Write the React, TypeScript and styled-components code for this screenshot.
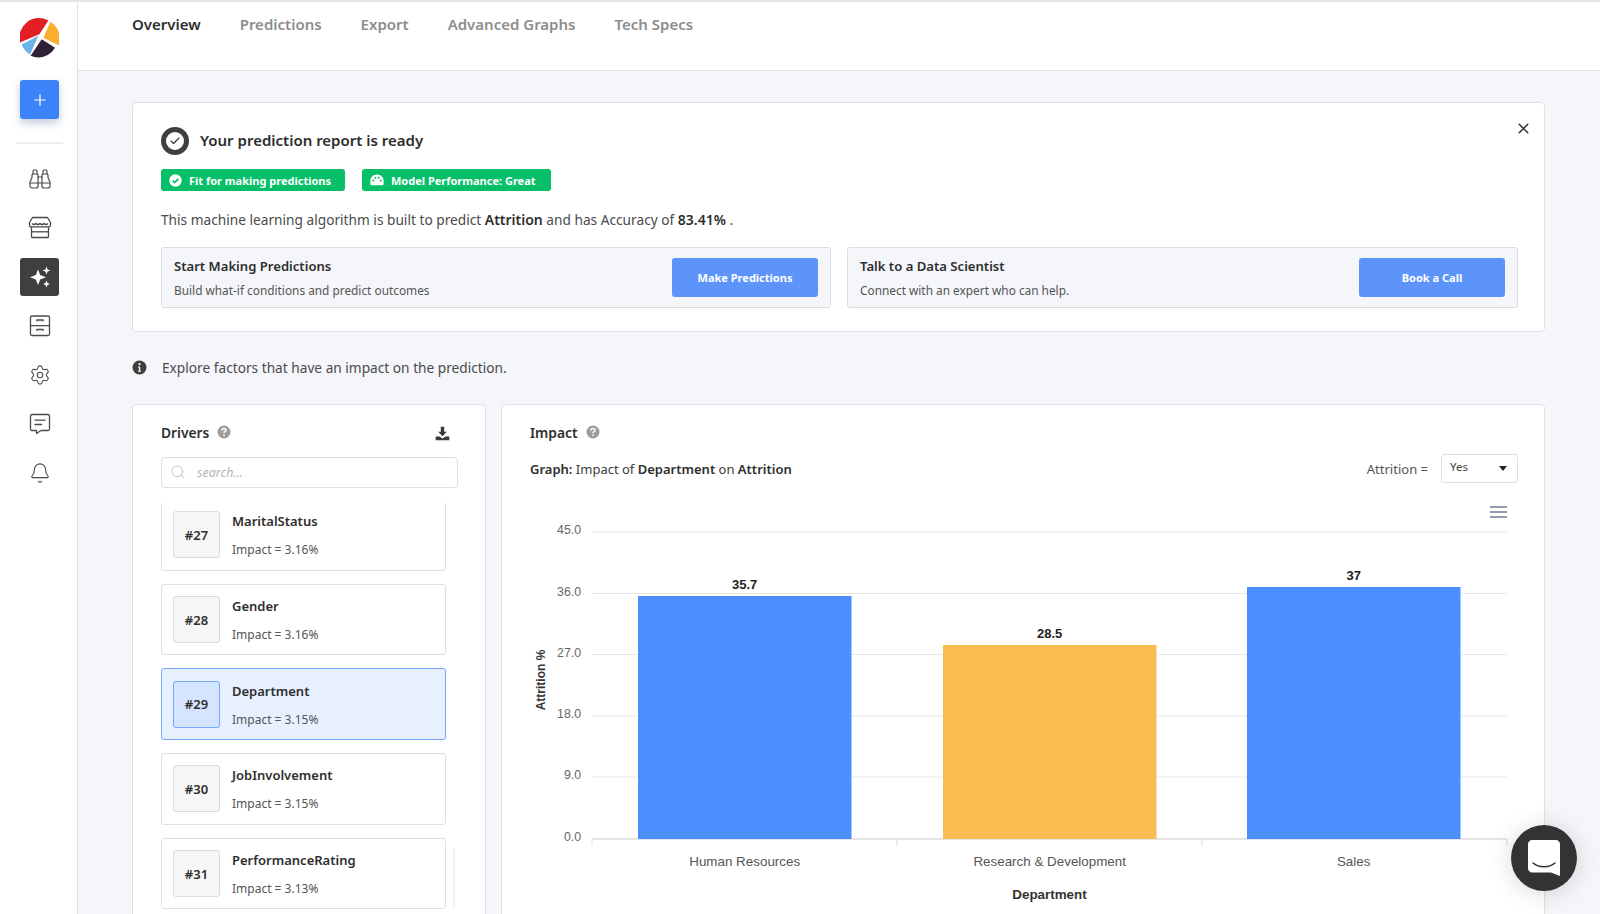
import styled, { createGlobalStyle } from "styled-components";
import { Bell, Binoculars, Check, Plus, Search, Settings, X } from "lucide-react";

interface Driver {
  rank: number;
  name: string;
  impact: string;
  active?: boolean;
}

const drivers: Driver[] = [
  { rank: 27, name: "MaritalStatus", impact: "3.16%" },
  { rank: 28, name: "Gender", impact: "3.16%" },
  { rank: 29, name: "Department", impact: "3.15%", active: true },
  { rank: 30, name: "JobInvolvement", impact: "3.15%" },
  { rank: 31, name: "PerformanceRating", impact: "3.13%" },
];

const bars = [
  { label: "Human Resources", value: "35.7", x: 638, top: 596, color: "#4d8eff" },
  { label: "Research & Development", value: "28.5", x: 943, top: 645, color: "#f8bc50" },
  { label: "Sales", value: "37", x: 1247, top: 587, color: "#4d8eff" },
];

const ticks = [
  { label: "45.0", y: 532 },
  { label: "36.0", y: 593.5 },
  { label: "27.0", y: 654.5 },
  { label: "18.0", y: 716 },
  { label: "9.0", y: 777 },
  { label: "0.0", y: 839 },
];

const GlobalStyle = createGlobalStyle`
  html, body {
    margin: 0;
    height: 100%;
    background: #f4f6fa;
    font-family: "Noto Sans", "Open Sans", sans-serif;
    color: #2e2e2e;
  }
  * {
    box-sizing: border-box;
  }
`;

const Page = styled.div`
  display: flex;
  width: 1600px;
  height: 914px;
  overflow: hidden;
  position: relative;
  border-top: 2px solid #e3e4e8;
`;

const Sidebar = styled.aside`
  width: 78px;
  flex-shrink: 0;
  background: #fff;
  border-right: 1px solid #dfe1e6;
  display: flex;
  flex-direction: column;
  align-items: center;
  padding: 16px 0 0 2px;
`;

const Logo = styled.svg`
  width: 39px;
  height: 40px;
  margin-bottom: 22px;
`;

const AddButton = styled.div`
  width: 39px;
  height: 39px;
  border-radius: 3px;
  background: #3c82f9;
  color: #fff;
  display: flex;
  align-items: center;
  justify-content: center;
  box-shadow: 0 4px 9px rgba(60, 90, 140, 0.3);
`;

const SideDivider = styled.div`
  width: 47px;
  height: 2px;
  background: #eceef1;
  margin: 23px 0 16px;
`;

const NavItem = styled.div<{ $active?: boolean }>`
  width: 39px;
  height: 38px;
  margin-bottom: 11px;
  border-radius: 3px;
  display: flex;
  align-items: center;
  justify-content: center;
  color: ${(p) => (p.$active ? "#fff" : "#4a4a4a")};
  background: ${(p) => (p.$active ? "#3f3f3f" : "transparent")};
`;

const Main = styled.div`
  flex: 1;
  display: flex;
  flex-direction: column;
  min-width: 0;
`;

const TopBar = styled.nav`
  height: 69px;
  flex-shrink: 0;
  background: #fff;
  border-bottom: 1px solid #dfe1e6;
  display: flex;
  gap: 39px;
  padding: 11px 0 0 54px;
`;

const Tab = styled.div<{ $active?: boolean }>`
  font-size: 15px;
  line-height: 22px;
  font-weight: 600;
  color: ${(p) => (p.$active ? "#2e2e2e" : "#8d8d8d")};
`;

const Content = styled.main`
  padding: 31px 55px 0 54px;
  display: flex;
  flex-direction: column;
`;

const Banner = styled.section`
  position: relative;
  height: 230px;
  background: #fff;
  border: 1px solid #dcdfe4;
  border-radius: 4px;
  padding: 24px 27px 0 28px;
`;

const BannerTitle = styled.div`
  display: flex;
  align-items: center;
  gap: 11px;
  font-size: 15px;
  font-weight: 600;
  line-height: 28px;
`;

const TitleText = styled.span`
  margin-top: -2px;
`;

const CheckRing = styled.div`
  width: 28px;
  height: 28px;
  flex-shrink: 0;
  border-radius: 50%;
  border: 5px solid #3f3f3f;
  color: #333;
  display: flex;
  align-items: center;
  justify-content: center;
`;

const CloseButton = styled.div`
  position: absolute;
  top: 17px;
  right: 12px;
  color: #333;
  display: flex;
`;

const Badges = styled.div`
  display: flex;
  gap: 17px;
  margin-top: 14px;
`;

const Badge = styled.div<{ $width: number }>`
  width: ${(p) => p.$width}px;
  height: 22px;
  background: #06bf68;
  border-radius: 3px;
  color: #fff;
  font-size: 11px;
  font-weight: 700;
  display: flex;
  align-items: center;
  gap: 7px;
  padding-left: 8px;
`;

const Summary = styled.p`
  margin: 18px 0 0;
  font-size: 13.7px;
  line-height: 22px;
  color: #4b4b4b;

  b {
    font-size: 14px;
    font-weight: 600;
    color: #2e2e2e;
  }
`;

const Actions = styled.div`
  display: grid;
  grid-template-columns: 670px 671px;
  gap: 16px;
  margin-top: 16px;
`;

const ActionCard = styled.div`
  height: 61px;
  background: #f4f6fa;
  border: 1px solid #d9dce1;
  border-radius: 3px;
  display: flex;
  align-items: center;
  justify-content: space-between;
  padding: 0 12px;
`;

const ActionTitle = styled.div`
  font-size: 13.1px;
  font-weight: 600;
  line-height: 18px;
`;

const ActionText = styled.div`
  font-size: 11.85px;
  line-height: 18px;
  color: #555;
  margin-top: 6px;
`;

const ActionButton = styled.div`
  width: 146px;
  height: 39px;
  padding-bottom: 1px;
  background: #5c94fa;
  border-radius: 3px;
  color: #fff;
  font-size: 11px;
  font-weight: 700;
  display: flex;
  align-items: center;
  justify-content: center;
`;

const Hint = styled.div`
  display: flex;
  align-items: center;
  gap: 15px;
  height: 22px;
  margin: 24px 0 26px;
  font-size: 13.7px;
  color: #4b4b4b;
`;

const Panels = styled.div`
  display: grid;
  grid-template-columns: 354px 1044px;
  gap: 15px;
  align-items: start;
`;

const Panel = styled.section`
  position: relative;
  height: 540px;
  background: #fff;
  border: 1px solid #dcdfe4;
  border-radius: 4px;
`;

const DriversPanel = styled(Panel)`
  padding: 15px 27px 0 28px;
`;

const PanelHead = styled.div`
  display: flex;
  align-items: center;
  justify-content: space-between;
  height: 24px;
`;

const PanelTitle = styled.div`
  display: flex;
  align-items: center;
  gap: 8px;
  font-size: 13.8px;
  font-weight: 600;
`;

const DownloadButton = styled.div`
  display: flex;
  margin: 2px 8px 0 0;
`;

const SearchBox = styled.div`
  height: 31px;
  margin-top: 13px;
  border: 1px solid #dcdfe4;
  border-radius: 4px;
  display: flex;
  align-items: center;
  gap: 11px;
  padding: 0 0 1px 8px;
  color: #b5b5b5;
  font-size: 12.5px;
  font-style: italic;
`;

const DriverList = styled.div`
  position: relative;
  margin-top: 15px;
  height: 430px;
  overflow: hidden;
  display: flex;
  flex-direction: column;
  gap: 13px;
`;

const DriverCard = styled.div<{ $active?: boolean }>`
  width: 285px;
  height: 71.7px;
  flex-shrink: 0;
  background: ${(p) => (p.$active ? "#e6f0ff" : "#fff")};
  border: 1px solid ${(p) => (p.$active ? "#75a7fb" : "#dcdfe4")};
  border-radius: 3px;
  display: flex;
  align-items: center;
  gap: 12px;
  padding: 0 11px;

  &:first-child {
    margin-top: -4px;
  }
`;

const Rank = styled.div<{ $active?: boolean }>`
  width: 47px;
  height: 47px;
  flex-shrink: 0;
  background: ${(p) => (p.$active ? "#d5e5ff" : "#f6f6f6")};
  border: 1px solid ${(p) => (p.$active ? "#75a7fb" : "#dcdcdc")};
  border-radius: 3px;
  display: flex;
  align-items: center;
  justify-content: center;
  font-size: 13px;
  font-weight: 600;
`;

const DriverText = styled.div`
  padding-top: 2px;
`;

const DriverName = styled.div`
  font-size: 13px;
  font-weight: 600;
  line-height: 18px;
`;

const DriverImpact = styled.div`
  font-size: 12px;
  line-height: 18px;
  color: #555;
  margin-top: 11px;
`;

const ScrollThumb = styled.div`
  position: absolute;
  left: 292px;
  top: 346px;
  width: 2px;
  height: 58px;
  background: #eeeff1;
`;

const ImpactPanel = styled(Panel)`
  padding: 15px 26px 0 28px;
`;

const GraphRow = styled.div`
  display: flex;
  align-items: center;
  justify-content: space-between;
  margin-top: 10px;
  height: 30px;
  font-size: 13px;
  color: #3c3c3c;

  b {
    font-weight: 600;
    color: #2e2e2e;
  }
`;

const Filter = styled.div`
  display: flex;
  align-items: center;
  gap: 13px;
  color: #555;
`;

const Select = styled.div`
  width: 77px;
  height: 29px;
  margin-top: -2px;
  border: 1px solid #dcdfe4;
  border-radius: 3px;
  display: flex;
  align-items: center;
  justify-content: space-between;
  padding: 0 10px 4px 8px;
  font-size: 11.5px;
  color: #444;
`;

const Caret = styled.span`
  width: 0;
  height: 0;
  margin-top: 5px;
  border-left: 4px solid transparent;
  border-right: 4px solid transparent;
  border-top: 5px solid #222;
`;

const Chart = styled.svg`
  position: absolute;
  left: -1px;
  top: 93px;
  width: 1044px;
  height: 420px;
  font-family: "Liberation Sans", Arial, sans-serif;
`;

const ChatBubble = styled.div`
  position: absolute;
  left: 1511px;
  top: 823px;
  width: 66px;
  height: 66px;
  border-radius: 50%;
  background: #333;
  box-shadow: 0 2px 24px rgba(0, 0, 0, 0.16);
  display: flex;
  align-items: center;
  justify-content: center;
`;

const SparkleIcon = () => (
  <svg width="24" height="24" viewBox="0 0 24 24" fill="currentColor">
    <path d="M10 4.5 12.2 10 18 12.2 12.2 14.4 10 20 7.8 14.4 2 12.2 7.8 10Z" />
    <path d="M18.5 1.5 19.6 4.4 22.5 5.5 19.6 6.6 18.5 9.5 17.4 6.6 14.5 5.5 17.4 4.4Z" />
    <path d="M18.5 15.5 19.5 18 22 19 19.5 20 18.5 22.5 17.5 20 15 19 17.5 18Z" />
  </svg>
);

const StoreIcon = () => (
  <svg width="24" height="24" viewBox="0 0 24 24" fill="none" stroke="currentColor" strokeWidth="1.3" strokeLinejoin="round">
    <path d="M4.5 1.5h15l3 5v2.8c0 1-.8 1.5-1.6 1.5H3.1c-.8 0-1.6-.5-1.6-1.5V6.5z" />
    <path d="M3.5 11v9.5c0 .6.4 1 1 1h15c.6 0 1-.4 1-1V11" />
    <path d="M3.5 15.8h17" />
    <path d="M4 7.5c1.3 1.3 2.7 1.3 4 0 1.3 1.3 2.7 1.3 4 0 1.3 1.3 2.7 1.3 4 0 1.3 1.3 2.7 1.3 4 0" />
  </svg>
);

const CabinetIcon = () => (
  <svg width="24" height="24" viewBox="0 0 24 24" fill="none" stroke="currentColor" strokeWidth="1.3" strokeLinecap="round">
    <rect x="2.5" y="2" width="19" height="19.5" rx="1.5" />
    <path d="M2.5 11.7h19" />
    <path d="M9 7V6h6v1M9 16.5v-1h6v1" />
  </svg>
);

const MessageIcon = () => (
  <svg width="24" height="24" viewBox="0 0 24 24" fill="none" stroke="currentColor" strokeWidth="1.3" strokeLinecap="round" strokeLinejoin="round">
    <path d="M4 2.5h16c1 0 1.5.5 1.5 1.5v13c0 1-.5 1.5-1.5 1.5h-7l-4.5 3v-3H4c-1 0-1.5-.5-1.5-1.5V4c0-1 .5-1.5 1.5-1.5z" />
    <path d="M7 8.2h10M7 12.5h6.5" />
  </svg>
);

const PerformanceIcon = () => (
  <svg width="14" height="12" viewBox="0 0 14 12" fill="currentColor">
    <path d="M7 .5C3.2.5.3 3.4.3 7v2.8c0 .9.6 1.5 1.5 1.5h10.4c.9 0 1.5-.6 1.5-1.5V7C13.7 3.4 10.8.5 7 .5z" />
    <circle cx="3.4" cy="6.4" r="1" fill="#06bf68" />
    <circle cx="5.4" cy="3.8" r="1" fill="#06bf68" />
    <circle cx="8.6" cy="3.8" r="1" fill="#06bf68" />
    <circle cx="10.6" cy="6.4" r="1" fill="#06bf68" />
  </svg>
);

const BadgeCheckIcon = () => (
  <svg width="13" height="13" viewBox="0 0 13 13">
    <circle cx="6.5" cy="6.5" r="6.2" fill="#fff" />
    <path d="M3.7 6.7 5.6 8.6 9.4 4.8" fill="none" stroke="#06bf68" strokeWidth="1.7" />
  </svg>
);

const HelpIcon = () => (
  <svg width="14" height="14" viewBox="0 0 14 14">
    <circle cx="7" cy="7" r="6.5" fill="#9c9c9c" />
    <path d="M5 5.4C5 4.2 5.9 3.6 7 3.6S9 4.3 9 5.3C9 6.6 7 6.7 7 8.1" fill="none" stroke="#fff" strokeWidth="1.5" />
    <circle cx="7" cy="10.2" r=".9" fill="#fff" />
  </svg>
);

const InfoIcon = () => (
  <svg width="15" height="15" viewBox="0 0 15 15">
    <circle cx="7.5" cy="7.5" r="7" fill="#3f3f3f" />
    <circle cx="7.5" cy="4.2" r="1.1" fill="#fff" />
    <path d="M6 6.6h2.2v4.2H9v1H6v-1h.9V7.6H6z" fill="#fff" />
  </svg>
);

const DownloadIcon = () => (
  <svg width="15" height="15" viewBox="0 0 15 15" fill="#3a3a3a">
    <path d="M5.8.8h3.4v5h2.6L7.5 10.2 3.2 5.8h2.6z" />
    <path d="M.7 10.4h3.8l3 2 3-2h3.8v3.8H.7z" />
  </svg>
);

const App = () => {
  return (
    <>
      <GlobalStyle />
      <Page>
        <Sidebar>
          <Logo viewBox="0 0 117 117">
            <path d="M0 72A58.5 58.5 0 0 1 85 6L58 47Z" fill="#e31f26" />
            <path d="M91 10A58.5 58.5 0 0 1 116 80L70 58Z" fill="#fbb02d" />
            <path d="M65 62 105 88A58.5 58.5 0 0 1 32 112Z" fill="#2f2035" />
            <path d="M5 78 55 52 30 108A58.5 58.5 0 0 1 5 78Z" fill="#6ab4e8" />
          </Logo>
          <AddButton>
            <Plus size={18} strokeWidth={1.6} />
          </AddButton>
          <SideDivider />
          <NavItem>
            <Binoculars size={24} strokeWidth={1.2} />
          </NavItem>
          <NavItem>
            <StoreIcon />
          </NavItem>
          <NavItem $active>
            <SparkleIcon />
          </NavItem>
          <NavItem>
            <CabinetIcon />
          </NavItem>
          <NavItem>
            <Settings size={22} strokeWidth={1.2} />
          </NavItem>
          <NavItem>
            <MessageIcon />
          </NavItem>
          <NavItem>
            <Bell size={22} strokeWidth={1.2} />
          </NavItem>
        </Sidebar>
        <Main>
          <TopBar>
            <Tab $active>Overview</Tab>
            <Tab>Predictions</Tab>
            <Tab>Export</Tab>
            <Tab>Advanced Graphs</Tab>
            <Tab>Tech Specs</Tab>
          </TopBar>
          <Content>
            <Banner>
              <CloseButton>
                <X size={17} strokeWidth={2.2} />
              </CloseButton>
              <BannerTitle>
                <CheckRing>
                  <Check size={12} strokeWidth={2.2} />
                </CheckRing>
                <TitleText>Your prediction report is ready</TitleText>
              </BannerTitle>
              <Badges>
                <Badge $width={184}>
                  <BadgeCheckIcon />
                  Fit for making predictions
                </Badge>
                <Badge $width={189}>
                  <PerformanceIcon />
                  Model Performance: Great
                </Badge>
              </Badges>
              <Summary>
                This machine learning algorithm is built to predict <b>Attrition</b> and has Accuracy of{" "}
                <b>83.41%</b> .
              </Summary>
              <Actions>
                <ActionCard>
                  <div>
                    <ActionTitle>Start Making Predictions</ActionTitle>
                    <ActionText>Build what-if conditions and predict outcomes</ActionText>
                  </div>
                  <ActionButton>Make Predictions</ActionButton>
                </ActionCard>
                <ActionCard>
                  <div>
                    <ActionTitle>Talk to a Data Scientist</ActionTitle>
                    <ActionText>Connect with an expert who can help.</ActionText>
                  </div>
                  <ActionButton>Book a Call</ActionButton>
                </ActionCard>
              </Actions>
            </Banner>
            <Hint>
              <InfoIcon />
              Explore factors that have an impact on the prediction.
            </Hint>
            <Panels>
              <DriversPanel>
                <PanelHead>
                  <PanelTitle>
                    Drivers <HelpIcon />
                  </PanelTitle>
                  <DownloadButton>
                    <DownloadIcon />
                  </DownloadButton>
                </PanelHead>
                <SearchBox>
                  <Search size={16} strokeWidth={1.2} />
                  search...
                </SearchBox>
                <DriverList>
                  {drivers.map((d) => (
                    <DriverCard key={d.rank} $active={d.active}>
                      <Rank $active={d.active}>#{d.rank}</Rank>
                      <DriverText>
                        <DriverName>{d.name}</DriverName>
                        <DriverImpact>Impact = {d.impact}</DriverImpact>
                      </DriverText>
                    </DriverCard>
                  ))}
                  <ScrollThumb />
                </DriverList>
              </DriversPanel>
              <ImpactPanel>
                <PanelHead>
                  <PanelTitle>
                    Impact <HelpIcon />
                  </PanelTitle>
                </PanelHead>
                <GraphRow>
                  <span>
                    <b>Graph:</b> Impact of <b>Department</b> on <b>Attrition</b>
                  </span>
                  <Filter>
                    Attrition =
                    <Select>
                      Yes
                      <Caret />
                    </Select>
                  </Filter>
                </GraphRow>
                <Chart viewBox="501 498 1044 420">
                  {ticks.map((t) => (
                    <g key={t.label}>
                      <line x1="592" x2="1507" y1={t.y} y2={t.y} stroke={t.y === 839 ? "#dcdcdc" : "#e8e8e8"} strokeWidth={t.y === 839 ? 1.5 : 1} />
                      <text x="581" y={t.y + 2} textAnchor="end" fontSize="12.3" fill="#666">
                        {t.label}
                      </text>
                    </g>
                  ))}
                  {[592, 897, 1202, 1507].map((x) => (
                    <line key={x} x1={x} x2={x} y1="839" y2="846" stroke="#dcdcdc" />
                  ))}
                  {bars.map((b) => (
                    <g key={b.label}>
                      <rect x={b.x} y={b.top} width="213.5" height={839 - b.top} fill={b.color} />
                      <text x={b.x + 106.7} y={b.top - 7} textAnchor="middle" fontSize="13" fontWeight="700" fill="#222">
                        {b.value}
                      </text>
                      <text x={b.x + 106.7} y="866" textAnchor="middle" fontSize="13.4" fill="#555">
                        {b.label}
                      </text>
                    </g>
                  ))}
                  <text x="1049.5" y="899" textAnchor="middle" fontSize="13.4" fontWeight="700" fill="#333">
                    Department
                  </text>
                  <text transform="translate(545 680) rotate(-90)" textAnchor="middle" fontSize="12" fontWeight="700" fill="#333">
                    Attrition %
                  </text>
                  <path d="M1490 507h17M1490 512h17M1490 517h17" stroke="#6e7f92" strokeWidth="1.4" />
                </Chart>
              </ImpactPanel>
            </Panels>
          </Content>
        </Main>
        <ChatBubble>
          <svg width="32" height="36" viewBox="0 0 32 36">
            <path d="M4 0h24c2 0 4 2 4 4v32l-9-3.5H4c-2 0-4-2-4-4V4c0-2 2-4 4-4z" fill="#fff" />
            <path d="M5 23c6 5 16 5 22 0" fill="none" stroke="#333" strokeWidth="1.6" strokeLinecap="round" />
          </svg>
        </ChatBubble>
      </Page>
    </>
  );
};

export default App;
